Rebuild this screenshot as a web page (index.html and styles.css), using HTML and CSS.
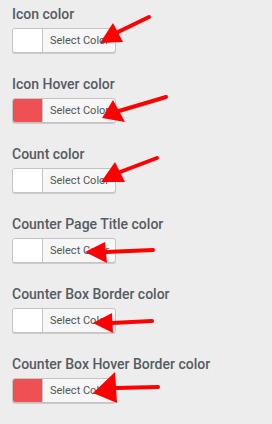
FILE: index.html
```html
<!DOCTYPE html>
<html lang="en">
<head>
    <meta charset="UTF-8">
    <meta name="viewport" content="width=device-width, initial-scale=1.0">
    <title>Counter colors</title>
    <link rel="stylesheet" href="styles.css">
</head>
<body>
    <div class="panel">
        <div class="field">
            <label class="field-label">Icon color</label>
            <button class="color-btn"><span class="swatch"></span><span class="btn-text">Select Color</span></button>
        </div>
        <div class="field">
            <label class="field-label">Icon Hover color</label>
            <button class="color-btn"><span class="swatch red"></span><span class="btn-text">Select Color</span></button>
        </div>
        <div class="field">
            <label class="field-label">Count color</label>
            <button class="color-btn"><span class="swatch"></span><span class="btn-text">Select Color</span></button>
        </div>
        <div class="field">
            <label class="field-label">Counter Page Title color</label>
            <button class="color-btn"><span class="swatch"></span><span class="btn-text">Select Color</span></button>
        </div>
        <div class="field">
            <label class="field-label">Counter Box Border color</label>
            <button class="color-btn"><span class="swatch"></span><span class="btn-text">Select Color</span></button>
        </div>
        <div class="field">
            <label class="field-label">Counter Box Hover Border color</label>
            <button class="color-btn"><span class="swatch red"></span><span class="btn-text">Select Color</span></button>
        </div>
    </div>

    <!-- annotation arrows drawn over the screenshot -->
    <svg class="arrows" width="272" height="424" viewBox="0 0 272 424">
        <g fill="#ff0000" stroke="#ff0000" stroke-width="4" stroke-linecap="round">
            <line x1="149" y1="17" x2="118" y2="32"/>
            <polygon stroke="none" points="100,43 113,23 123,42"/>
            <line x1="166" y1="97" x2="119" y2="111"/>
            <polygon stroke="none" points="102,118 113,100 125,122"/>
            <line x1="157" y1="158" x2="120" y2="172"/>
            <polygon stroke="none" points="101,182 115,162 125,182"/>
            <line x1="153" y1="250" x2="106" y2="252"/>
            <polygon stroke="none" points="85,252 105,242 107,263"/>
            <line x1="152" y1="321" x2="112" y2="323"/>
            <polygon stroke="none" points="93,323 112,313 113,333"/>
            <line x1="158" y1="387" x2="116" y2="388"/>
            <polygon stroke="none" points="93,393 115,372 117,403"/>
        </g>
    </svg>
</body>
</html>
```

FILE: styles.css
```css
* {
    box-sizing: border-box;
    margin: 0;
    padding: 0;
}

body {
    background-color: #ededed;
    font-family: Roboto, "Liberation Sans", Arial, sans-serif;
    position: relative;
    width: 272px;
    height: 424px;
    overflow: hidden;
}

.panel {
    display: flex;
    flex-direction: column;
    gap: 23px;
    padding: 6px 0 0 12px;
}

.field {
    display: flex;
    flex-direction: column;
    align-items: flex-start;
    gap: 5px;
}

.field-label {
    font-size: 14px;
    line-height: 17px;
    font-weight: 500;
    color: #555b63;
}

.color-btn {
    display: flex;
    height: 25px;
    width: 104px;
    border: 1px solid #c4c4c4;
    border-radius: 3px;
    background-color: #f7f7f7;
    box-shadow: 0 1px 0 #cccccc;
    overflow: hidden;
    font-family: Roboto, "Liberation Sans", Arial, sans-serif;
}

.swatch {
    width: 30px;
    height: 100%;
    background-color: #ffffff;
    border-right: 1px solid #c4c4c4;
}

.swatch.red {
    background-color: #ee5053;
}

.btn-text {
    flex: 1;
    font-size: 11px;
    line-height: 23px;
    color: #555555;
    text-align: left;
    padding-left: 7px;
}

.arrows {
    position: absolute;
    left: 0;
    top: 0;
}
```
